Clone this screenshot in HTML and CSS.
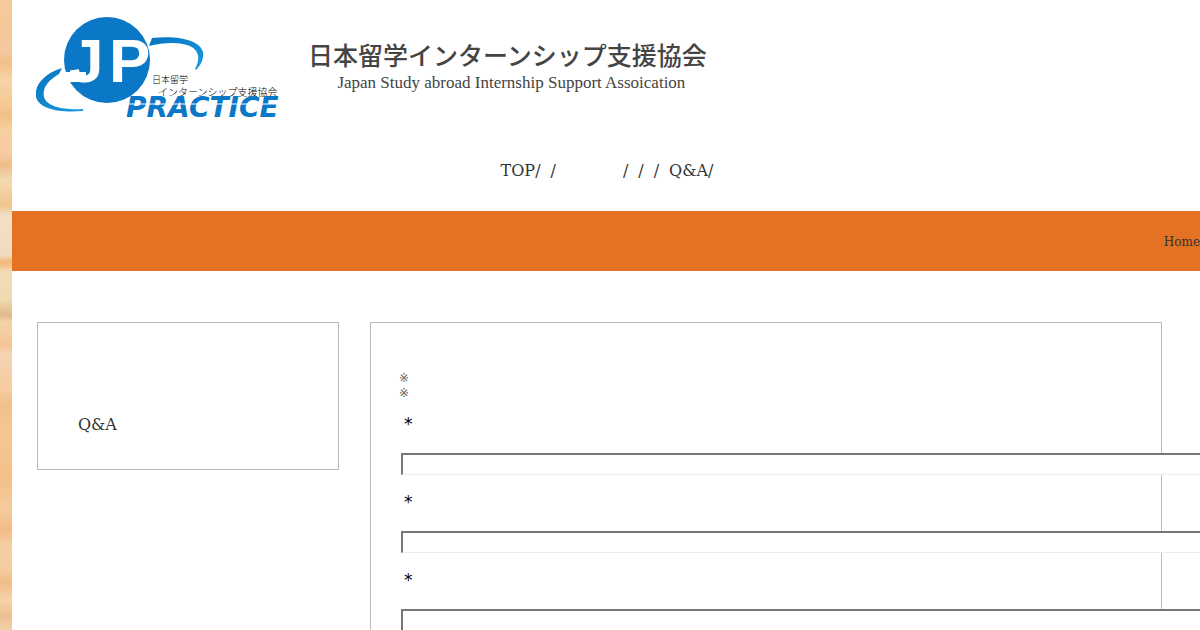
FILE: index.html
```
<!DOCTYPE html>
<html lang="ja">
<head>
    <meta charset="UTF-8">
    <meta name="viewport" content="width=device-width, initial-scale=1.0">
    <title>日本留学インターンシップ支援協会</title>
    <link rel="stylesheet" href="styles.css">
</head>
<body>
    <div class="wrapper">
        <header class="site-header">
            <a class="logo" href="#" aria-label="JP Practice">
                <svg width="246" height="110" viewBox="36 15 246 110">
                    <defs>
                        <linearGradient id="orbit" x1="0" y1="0" x2="1" y2="1">
                            <stop offset="0" stop-color="#0674c0"/>
                            <stop offset="1" stop-color="#1c9be0"/>
                        </linearGradient>
                    </defs>
                    <circle cx="107" cy="60" r="43" fill="#0a78c6"/>
                    <path d="M62 72 H86 V82 H70 Z" fill="#fff"/>
                    <text class="logo-jp" x="69" y="82">J</text>
                    <text class="logo-jp" x="109" y="82">P</text>
                    <!-- orbit around the globe -->
                    <path d="M62 68 C43 74 34 86 36 97 C39 109 59 113 83 111 L83 109 C64 110 47 107 44 97 C42 87 49 80 59 74 Z" fill="url(#orbit)"/>
                    <path d="M152 38 C178 35 200 40 203 52 C204 59 201 65 196 70 L195 69 C200 60 200 51 190 46 C180 42 165 42 149 46 Z" fill="url(#orbit)"/>
                    <text class="logo-small" x="152" y="83">日本留学</text>
                    <text class="logo-sub" x="158" y="96">インターンシップ支援協会</text>
                    <text class="logo-practice" x="126" y="117">PRACTICE</text>
                    <path d="M126 104 H281" stroke="#fff" stroke-width="1"/>
                </svg>
            </a>
            <div class="site-title">
                <h1>日本留学インターンシップ支援協会</h1>
                <p>Japan Study abroad Internship Support Assoication</p>
            </div>
        </header>

        <nav class="main-nav">
            <ul>
                <li><a href="#">TOP</a>/</li>
                <li>/</li>
                <li class="wide">/</li>
                <li>/</li>
                <li>/</li>
                <li><a href="#">Q&amp;A</a>/</li>
            </ul>
        </nav>

        <div class="breadcrumb">
            <a href="#">Home</a>
        </div>

        <div class="content">
            <aside class="sidebar">
                <a href="#">Q&amp;A</a>
            </aside>

            <main class="panel">
                <p class="notes">※<br>※</p>
                <form>
                    <div class="form-group">
                        <label for="field-1">*</label>
                        <input type="text" id="field-1">
                    </div>
                    <div class="form-group">
                        <label for="field-2">*</label>
                        <input type="text" id="field-2">
                    </div>
                    <div class="form-group">
                        <label for="field-3">*</label>
                        <input type="text" id="field-3">
                    </div>
                </form>
            </main>
        </div>
    </div>
</body>
</html>
```
FILE: styles.css
```
* {
    box-sizing: border-box;
}

body {
    margin: 0;
    padding-left: 12px;
    height: 100vh;
    overflow: hidden;
    font-family: "DejaVu Serif", serif;
    font-size: 16px;
    color: #333;
    background: linear-gradient(#f6cb9b 0, #f5c797 25px, #f4c8a0 50px, #f3bf8a 62px, #f7d3a6 80px, #f5c893 105px, #f2bf86 115px, #f7cfa0 130px, #f6caa0 155px, #eebd8a 165px, #f4dab0 180px, #efc48e 205px, #f2dfc6 215px, #f0dcc0 255px, #f2b676 262px, #f3dcb8 272px, #f0d8b0 300px, #dfb98a 315px, #f3d3a8 322px, #f5c595 345px, #f3d5b4 355px, #f6cb9e 390px, #f2bf8b 405px, #f6c692 430px, #f4c08a 480px, #f6cb9e 510px, #f1bb84 530px, #f3cfa5 545px, #f5cba0 570px, #f1bd88 582px, #f4d3a8 600px, #ecc090 615px, #f3d0a8 630px);
}

a {
    color: inherit;
    text-decoration: none;
}

.wrapper {
    height: 100%;
    overflow: hidden;
    background-color: #fff;
}

.site-header {
    display: flex;
    gap: 26px;
    padding: 15px 24px 0;
}

.logo svg {
    display: block;
}

.logo-jp {
    font-family: "Liberation Sans", sans-serif;
    font-size: 62px;
    font-weight: bold;
    fill: #fff;
}

.logo-small,
.logo-sub {
    font-family: "Noto Sans CJK JP", sans-serif;
    font-size: 9px;
    font-weight: 300;
    fill: #000;
}

.logo-sub {
    font-size: 10px;
}

.logo-practice {
    font-family: "DejaVu Sans", sans-serif;
    font-size: 28px;
    font-weight: bold;
    font-style: italic;
    fill: #0a78c6;
}

.site-title {
    padding-top: 20px;
    color: #444;
    text-align: center;
}

.site-title h1 {
    margin: 0;
    font-family: "Noto Sans CJK JP", sans-serif;
    font-size: 25px;
    font-weight: 500;
    line-height: 38px;
}

.site-title p {
    margin: 0;
    padding-left: 8px;
    font-family: "Liberation Serif", serif;
    font-size: 17px;
    line-height: 20px;
}

.main-nav {
    padding: 35px 0 29px;
}

.main-nav ul {
    display: flex;
    justify-content: center;
    gap: 10px;
    margin: 0;
    padding: 0 0 0 2px;
    line-height: 22px;
    list-style: none;
}

.main-nav .wide {
    padding-left: 57px;
}

.breadcrumb {
    display: flex;
    justify-content: flex-end;
    padding: 2px 0 0;
    background-color: #e37222;
    font-size: 12px;
    line-height: 58px;
}

.content {
    display: flex;
    align-items: flex-start;
    gap: 31px;
    padding: 51px 38px 0 25px;
}

.sidebar {
    width: 302px;
    padding: 91px 40px 33px;
    border: 1px solid #bbb;
    line-height: 22px;
}

.panel {
    flex: 1;
    min-width: 0;
    padding: 48px 28px;
    border: 1px solid #bbb;
}

.notes {
    margin: 0 0 12px;
    color: #666;
    font-family: "DejaVu Sans", sans-serif;
    font-size: 12px;
    line-height: 15px;
}

.form-group {
    margin: 0 2px 16px;
}

.form-group label {
    display: block;
    padding: 0 3px;
    margin-bottom: 18px;
    font-family: "DejaVu Sans", sans-serif;
    font-size: 17px;
    color: #000;
    line-height: 22px;
}

.form-group input {
    display: block;
    width: 120%;
    height: 22px;
    padding: 1px 2px;
    border: 2px solid;
    border-color: #767676 #ededed #ededed #767676;
    border-bottom-width: 1px;
    background-color: #fff;
}
```
